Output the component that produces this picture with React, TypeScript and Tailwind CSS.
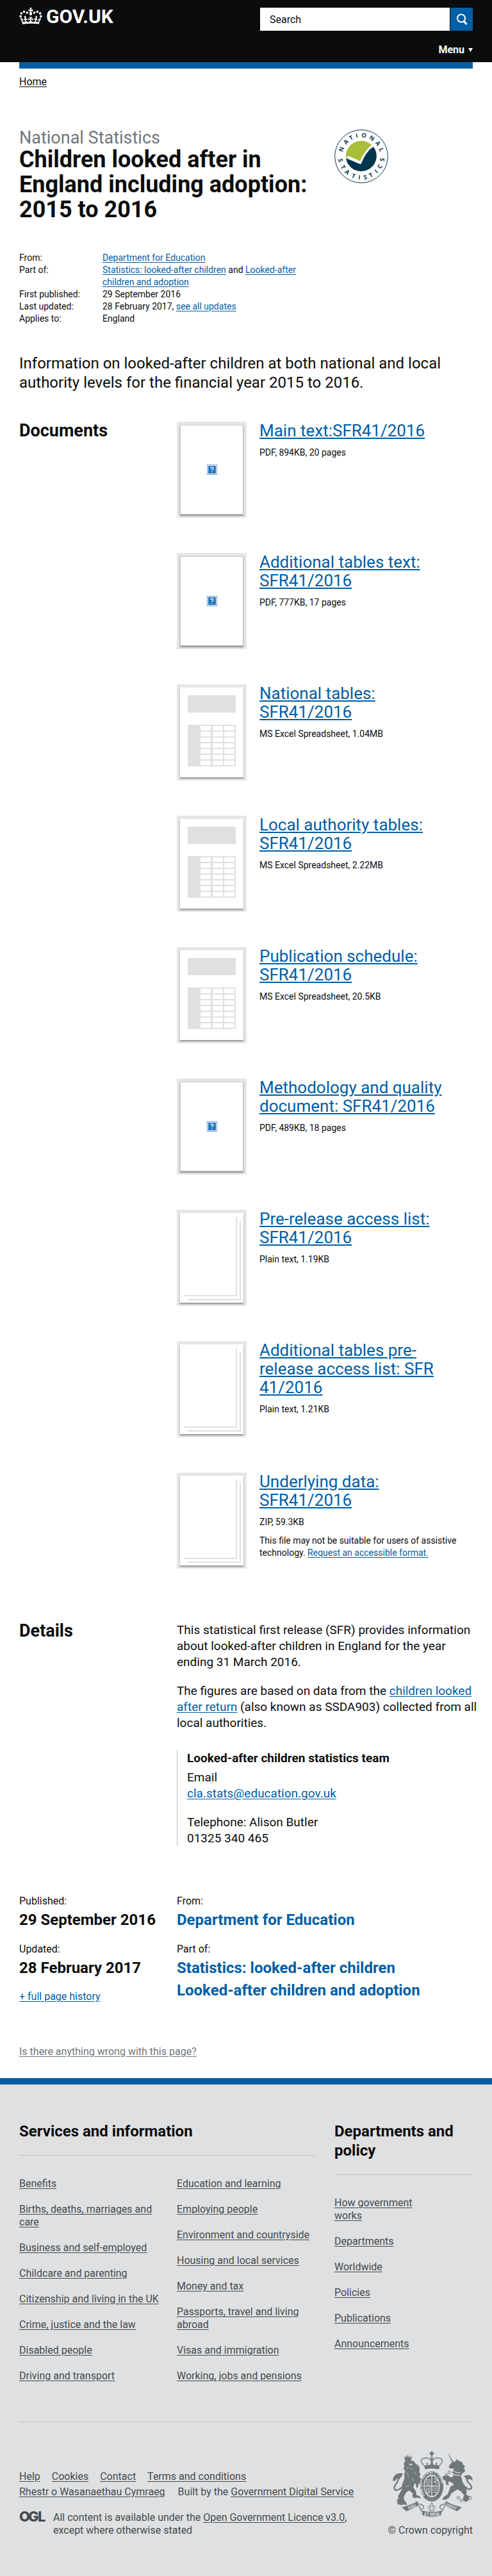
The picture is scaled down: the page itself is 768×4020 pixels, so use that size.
import React from "react";

type ThumbKind = "pdf" | "sheet" | "pages";

interface Doc {
  title: string;
  meta: string;
  kind: ThumbKind;
  accessible?: boolean;
}

const documents: Doc[] = [
  { title: "Main text:SFR41/2016", meta: "PDF, 894KB, 20 pages", kind: "pdf" },
  { title: "Additional tables text: SFR41/2016", meta: "PDF, 777KB, 17 pages", kind: "pdf" },
  { title: "National tables: SFR41/2016", meta: "MS Excel Spreadsheet, 1.04MB", kind: "sheet" },
  { title: "Local authority tables: SFR41/2016", meta: "MS Excel Spreadsheet, 2.22MB", kind: "sheet" },
  { title: "Publication schedule: SFR41/2016", meta: "MS Excel Spreadsheet, 20.5KB", kind: "sheet" },
  { title: "Methodology and quality document: SFR41/2016", meta: "PDF, 489KB, 18 pages", kind: "pdf" },
  { title: "Pre-release access list: SFR41/2016", meta: "Plain text, 1.19KB", kind: "pages" },
  { title: "Additional tables pre-release access list: SFR 41/2016", meta: "Plain text, 1.21KB", kind: "pages" },
  { title: "Underlying data: SFR41/2016", meta: "ZIP, 59.3KB", kind: "pages", accessible: true },
];

const servicesLeft = [
  "Benefits",
  "Births, deaths, marriages and care",
  "Business and self-employed",
  "Childcare and parenting",
  "Citizenship and living in the UK",
  "Crime, justice and the law",
  "Disabled people",
  "Driving and transport",
];

const servicesRight = [
  "Education and learning",
  "Employing people",
  "Environment and countryside",
  "Housing and local services",
  "Money and tax",
  "Passports, travel and living abroad",
  "Visas and immigration",
  "Working, jobs and pensions",
];

const departments = [
  "How government works",
  "Departments",
  "Worldwide",
  "Policies",
  "Publications",
  "Announcements",
];

function Link({ children, className = "" }: { children: React.ReactNode; className?: string }) {
  return (
    <a href="#" className={`text-[#005ea5] underline underline-offset-2 ${className}`}>
      {children}
    </a>
  );
}

function Crown() {
  return (
    <svg viewBox="0 0 132 97" className="h-[26px] w-9 fill-white" aria-hidden="true">
      <path d="M25 30.2c3.5 1.5 7.7-.2 9.1-3.7 1.5-3.6-.2-7.8-3.9-9.2-3.6-1.4-7.6.3-9.1 3.9-1.4 3.5.3 7.5 3.9 9zM9 39.5c3.6 1.5 7.8-.2 9.2-3.7 1.5-3.6-.2-7.8-3.9-9.1-3.6-1.5-7.6.2-9.1 3.8-1.4 3.5.3 7.5 3.8 9zM4.4 57.2c3.5 1.5 7.7-.2 9.1-3.8 1.5-3.6-.2-7.7-3.9-9.1-3.5-1.5-7.6.3-9.1 3.8-1.4 3.5.3 7.6 3.9 9.1zm38.3-21.4c3.5 1.5 7.7-.2 9.1-3.8 1.5-3.6-.2-7.7-3.9-9.1-3.6-1.5-7.6.3-9.1 3.8-1.3 3.6.4 7.7 3.9 9.1zm64.4-5.6c-3.6 1.5-7.8-.2-9.1-3.7-1.5-3.6.2-7.8 3.8-9.2 3.6-1.4 7.7.3 9.2 3.9 1.3 3.5-.4 7.5-3.9 9zm15.9 9.3c-3.6 1.5-7.7-.2-9.1-3.7-1.5-3.6.2-7.8 3.7-9.1 3.6-1.5 7.7.2 9.2 3.8 1.5 3.5-.3 7.5-3.8 9zm4.7 17.7c-3.6 1.5-7.8-.2-9.2-3.8-1.5-3.6.2-7.7 3.9-9.1 3.6-1.5 7.7.3 9.2 3.8 1.3 3.5-.4 7.6-3.9 9.1zM89.3 35.8c-3.6 1.5-7.8-.2-9.2-3.8-1.4-3.6.2-7.7 3.9-9.1 3.6-1.5 7.7.3 9.2 3.8 1.4 3.6-.3 7.7-3.9 9.1zM69.7 17.7l8.9 4.7V9.3l-8.9 2.8c-.2-.3-.5-.6-.9-.9L72.4 0H59.6l3.5 11.2c-.3.3-.6.5-.9.9l-8.8-2.8v13.1l8.8-4.7c.3.3.6.7.9.9l-5 15.4v.1c-.2.8-.4 1.6-.4 2.4 0 4.1 3.1 7.5 7 8.1h.2c.3 0 .7.1 1 .1.4 0 .7 0 1-.1h.2c4-.6 7.1-4.1 7.1-8.1 0-.8-.1-1.7-.4-2.4V34l-5.1-15.4c.4-.2.7-.6 1-.9zM66 92.8c16.9 0 32.8 1.1 47.1 3.2 4-16.9 8.9-26.7 14-33.5l-9.6-3.4c1 4.9 1.1 7.2 0 10.2-1.5-1.4-3-4.3-4.2-8.7L108.6 76c2.8-2 5-3.2 7.5-3.3-4.4 9.4-10 11.9-13.6 11.2-4.3-.8-6.3-4.6-5.6-7.9 1-4.7 5.7-5.9 8-.5 4.3-8.7-3-11.4-7.6-8.8 7.1-7.2 7.9-13.5 2.1-21.1-8 6.1-8.1 12.3-4.5 20.8-4.7-5.4-12.1-2.5-9.5 6.2 3.4-5.2 7.9-2 7.2 3.1-.6 4.3-6.4 7.8-13.5 7.2-10.3-.9-10.9-8-11.2-13.8 2.5-.5 7.1 1.8 11 7.3L80.2 60c-4.1 4.4-8 5.3-12.3 5.4 1.4-4.4 8-11.6 8-11.6H55.5s6.4 7.2 7.9 11.6c-4.2-.1-8-1-12.3-5.4l1.4 16.4c3.9-5.5 8.5-7.7 10.9-7.3-.3 5.8-.9 12.8-11.1 13.8-7.2.6-12.9-2.9-13.5-7.2-.7-5 3.8-8.3 7.1-3.1 2.7-8.7-4.6-11.6-9.4-6.2 3.7-8.5 3.6-14.7-4.6-20.8-5.8 7.6-5 13.9 2.2 21.1-4.7-2.6-11.9.1-7.7 8.8 2.3-5.5 7.1-4.2 8.1.5.7 3.3-1.3 7.1-5.7 7.9-3.5.7-9-1.8-13.5-11.2 2.5.1 4.7 1.3 7.5 3.3l-4.7-15.4c-1.2 4.4-2.7 7.2-4.3 8.7-1.1-3-.9-5.3 0-10.2l-9.5 3.4c5 6.9 9.9 16.7 14 33.5 14.8-2.1 30.8-3.2 47.7-3.2z" />
    </svg>
  );
}

function StatisticsBadge() {
  return (
    <svg viewBox="0 0 252 252" className="size-[84px]" role="img" aria-label="National Statistics">
      <circle cx="126" cy="126" r="124" fill="#fff" stroke="#0b3a50" strokeWidth="3" />
      <path d="M54 134A72 72 0 0 1 174 72C152 92 136 120 124 150L64 124Z" fill="#a9bd38" />
      <path d="M54 134L122 163C138 124 154 98 183 81A72 72 0 1 1 54 134Z" fill="#00364d" />
      <path d="M68 130L122 156C136 120 154 94 180 76" fill="none" stroke="#fff" strokeWidth="9" />
      <path id="badge-top" d="M37 126A89 89 0 0 1 215 126" fill="none" />
      <path id="badge-bottom" d="M17 126A109 109 0 0 0 235 126" fill="none" />
      <g fill="#00364d" fontFamily="'Open Sans', sans-serif" fontWeight="700" fontSize="28">
        {["N", "A", "T", "I", "O", "N", "A", "L"].map((c, i) => (
          <text key={i} textAnchor="middle">
            <textPath href="#badge-top" startOffset={`${[11, 24, 34, 43, 54, 67, 79, 90][i]}%`}>
              {c}
            </textPath>
          </text>
        ))}
        {["S", "T", "A", "T", "I", "S", "T", "I", "C", "S"].map((c, i) => (
          <text key={i} textAnchor="middle">
            <textPath href="#badge-bottom" startOffset={`${[6, 17, 27, 38, 47, 56, 65, 75, 84, 95][i]}%`}>
              {c}
            </textPath>
          </text>
        ))}
      </g>
    </svg>
  );
}

function Thumbnail({ kind }: { kind: ThumbKind }) {
  return (
    <div className="h-[150px] w-[109px] shrink-0 bg-[#e6e6e6] p-[5px]">
      <div
        className={`flex h-[140px] items-center justify-center bg-white shadow-[0_2px_2px_rgba(11,12,12,0.4)] ${
          kind === "pdf" ? "border border-[#c8c8c8]" : ""
        }`}
      >
        {kind === "pdf" && (
          <svg viewBox="0 0 16 16" className="size-4" aria-hidden="true">
            <rect x="0.5" y="0.5" width="15" height="15" fill="#fff" stroke="#6f9bd0" />
            <rect x="2" y="2" width="12" height="12" fill="#2378bd" />
            <path d="M6 6.200C6 3.600 10 3.700 10 6C10 7.600 8 7.500 8 9.300M8 11v1.300" fill="none" stroke="#fff" strokeWidth="1.300" />
          </svg>
        )}
        {kind === "sheet" && (
          <svg viewBox="0 0 99 140" className="h-[140px] w-[99px]" aria-hidden="true">
            <path d="M12 12h75v27H12zM12 58h75v65H12z" fill="#dee0e2" />
            {[0, 1, 2, 3, 4, 5, 6].map((r) =>
              [32, 51, 69].map((x) => <rect key={`${r}-${x}`} x={x} y={60 + r * 9} width="16" height="7" fill="#fff" />),
            )}
          </svg>
        )}
        {kind === "pages" && (
          <svg viewBox="0 0 99 140" className="h-[140px] w-[99px]" aria-hidden="true">
            <path d="M88 6V129H6M94 12V135H12" fill="none" stroke="#dee0e2" strokeWidth="2" />
          </svg>
        )}
      </div>
    </div>
  );
}

function Crest() {
  return (
    <svg viewBox="39 33 375 308" className="h-[103px] w-[125px]" role="img" aria-label="Royal coat of arms">
      <g fill="#6f777b">
        <path d="M218 33h8v7h7v8h-7v10h-8V48h-7v-8h7z" />
        <path d="M188 101Q222 92 257 101L256 119Q222 111 189 119Z" />
        <path d="M187 119Q222 111 257 119V124Q222 116 187 124Z" fill="#dee0e2" />
        <path d="M218 60h8v24h-8zM196 96l4-12 6 12zM238 96l6-12 5 12zM213 97l9-17 9 17z" />
      </g>
      <path
        d="M190 103C165 85 170 66 192 65C210 64 217 72 221 82M254 103C279 85 274 66 252 65C234 64 227 72 223 82"
        fill="none"
        stroke="#6f777b"
        strokeWidth="6"
        strokeDasharray="5 2"
      />
      <g fill="#6f777b">
        <path d="M92 56l6 9 3-12 5 11 4-17 4 17 6-11 2 12 8-9-5 21-28 2z" />
        <path d="M98 80L118 76L137 79L148 94L158 98L166 114L163 128L169 144L164 152L174 168L171 184L160 188L157 202L150 206L148 188L140 184L136 204L148 221L150 238L166 244L170 256L158 251L140 253L130 245L134 232L117 217L102 226L91 246L93 262L104 276L106 286L90 282L78 286L60 280L62 270L57 262L66 255L64 244L72 230L84 208L82 190L88 178L94 160L93 140L98 128L90 116L94 100L90 92Z" />
        <path d="M112 90l10 4 10-3-4 9-9-2z" fill="#dee0e2" />
        <path d="M121 112l12 6M112 104l-4 12M140 130l9 10M106 134l8 18M128 158l10 16M100 200l16-6" stroke="#dee0e2" strokeWidth="2" />
        <path d="M296 39L324 84L318 88Z" />
        <path d="M304 100L318 84L332 82L338 70L348 78L364 84L368 96L377 102L373 114L379 126L366 136L358 150L364 166L366 184L378 196L386 216L384 236L398 246L396 260L382 270L370 266L368 252L374 240L360 222L342 212L334 218L314 230L304 250L284 262L270 258L282 244L296 236L304 214L310 198L326 190L314 178L298 176L302 192L290 190L286 172L274 164L272 152L288 146L300 148L312 156L324 150L318 132L326 116L314 114L302 112Z" />
        <path d="M39 172L43 154L56 140L74 136L87 138L80 152L70 164L60 160L50 172ZM414 172L410 154L396 144L376 148L372 150L382 162L392 166L402 164Z" />
      </g>
      <path
        d="M66 158C68 180 42 190 47 210C52 222 72 212 86 200M386 162C384 182 412 188 408 206C402 218 386 208 370 194"
        fill="none"
        stroke="#6f777b"
        strokeWidth="7"
      />
      <path d="M316 122q18 14 42 12M312 132q18 16 44 14" stroke="#dee0e2" strokeWidth="4" fill="none" />
      <path d="M318 128l5 6 5-3 5 8 6-4 4 6 6-4 4 5" stroke="#6f777b" strokeWidth="3" fill="none" />
      <g fill="none" stroke="#6f777b" strokeWidth="3">
        <circle cx="304" cy="132" r="6" />
        <circle cx="290" cy="144" r="6" />
        <circle cx="366" cy="186" r="6" />
        <circle cx="370" cy="224" r="6" />
        <circle cx="346" cy="251" r="6" />
        <circle cx="360" cy="264" r="6" />
        <circle cx="383" cy="260" r="8" />
        <circle cx="399" cy="252" r="8" />
      </g>
      <ellipse cx="222" cy="198" rx="56" ry="73" fill="#dee0e2" />
      <ellipse cx="222" cy="198" rx="54" ry="71" fill="#6f777b" />
      <ellipse cx="222" cy="196" rx="38" ry="53" fill="#dee0e2" />
      <path id="garter" d="M190 240C162 195 180 139 222 138C266 139 282 197 252 242" fill="none" />
      <text fill="#dee0e2" fontFamily="Roboto, sans-serif" fontWeight="700" fontSize="15">
        <textPath href="#garter">HONI SOIT QUI MAL Y PENSE</textPath>
      </text>
      <path d="M200 256q22 8 44 0" fill="none" stroke="#dee0e2" strokeWidth="3" strokeDasharray="4 10" />
      <ellipse cx="222" cy="196" rx="34" ry="47" fill="#6f777b" />
      <path d="M222 148v96M188 196h68" stroke="#dee0e2" strokeWidth="4" />
      <path
        d="M196 168h20M194 178h22M196 188h18M232 160l18 10-18 6 20 10M198 204v22q10 12 16-4v-20M206 204v24M230 206h22M230 216h20M232 226h14"
        fill="none"
        stroke="#dee0e2"
        strokeWidth="4"
        strokeDasharray="6 2"
      />
      <g fill="#6f777b" stroke="#dee0e2" strokeWidth="2">
        <path d="M80 295L92 306L104 315Q136 302 162 286L156 266Q128 284 80 295Z" />
        <path d="M364 295L352 306L340 315Q308 302 282 286L288 266Q316 284 364 295Z" />
        <path d="M174 310Q222 324 270 310L266 334Q222 348 178 334Z" />
      </g>
      <path
        d="M160 287Q168 302 175 316M162 280Q186 284 184 298Q180 304 174 306M284 287Q276 302 269 316M282 280Q258 284 260 298Q264 304 270 306"
        fill="none"
        stroke="#6f777b"
        strokeWidth="4"
      />
      <path d="M222 274q9 12 4 20 12-8 12 2 0 8-10 6l4 10h-20l4-10q-10 2-10-6 0-10 12-2-5-8 4-20z" fill="none" stroke="#6f777b" strokeWidth="3" />
      <g fill="#dee0e2" fontFamily="Roboto, sans-serif" fontWeight="700" textAnchor="middle">
        <text x="222" y="335" fontSize="19">ET MON</text>
        <text x="130" y="299" fontSize="18" transform="rotate(-24 130 294)">DIEU</text>
        <text x="314" y="299" fontSize="18" transform="rotate(24 314 294)">DROIT</text>
      </g>
    </svg>
  );
}

function FooterLinks({ items }: { items: string[] }) {
  return (
    <ul className="-mr-3 flex flex-col gap-5">
      {items.map((item) => (
        <li key={item}>
          <a href="#" className="underline underline-offset-2">
            {item}
          </a>
        </li>
      ))}
    </ul>
  );
}

function Header() {
  return (
    <header>
      <div className="flex h-[97px] flex-col justify-between bg-[#0b0c0c] px-[30px] pt-3 pb-[9px] text-white">
        <div className="flex items-start justify-between">
          <a href="#" className="flex items-start gap-[6px] text-[30px] leading-7 font-bold">
            <Crown />
            GOV.UK
          </a>
          <form className="flex gap-px" onSubmit={(e) => e.preventDefault()}>
            <input
              type="search"
              aria-label="Search"
              placeholder="Search"
              className="h-9 w-[296px] bg-white px-[15px] text-base text-[#0b0c0c] outline-none placeholder:text-[#0b0c0c]"
            />
            <button type="submit" aria-label="Search" className="flex h-9 w-[35px] items-center justify-center bg-[#005ea5]">
              <svg viewBox="0 0 18 18" className="size-[18px]" fill="none" stroke="#fff" aria-hidden="true">
                <circle cx="8" cy="7.500" r="6" strokeWidth="2" />
                <path d="M12 12l4.500 5" strokeWidth="3" />
              </svg>
            </button>
          </form>
        </div>
        <button type="button" className="flex items-center gap-[6px] self-end text-base leading-5 font-bold">
          Menu
          <svg viewBox="0 0 7 6" className="h-[6px] w-[7px] fill-white" aria-hidden="true">
            <path d="M0 0h7L3.500 6z" />
          </svg>
        </button>
      </div>
      <div className="mx-[30px] h-[10px] bg-[#005ea5]" />
    </header>
  );
}

export default function App() {
  return (
    <div className="bg-white font-[Roboto,sans-serif] text-base leading-5 text-[#0b0c0c]">
      <Header />

      <main className="px-[30px]">
        <nav aria-label="Breadcrumb" className="pt-[11px]">
          <a href="#" className="underline underline-offset-2">Home</a>
        </nav>

        <div className="mt-[62px] grid grid-cols-3 gap-[30px]">
          <div className="col-span-2">
            <p className="text-[27px] leading-[30px] text-[#6f777b]">National Statistics</p>
            <h1 className="text-[36px] leading-[39px] font-bold">Children looked after in England including adoption: 2015 to 2016</h1>
          </div>
          <div className="pt-[2px]">
            <StatisticsBadge />
          </div>
        </div>

        <dl className="mt-[46px] grid w-[445px] max-w-full grid-cols-[130px_1fr] text-sm leading-[19px]">
          <dt>From:</dt>
          <dd><Link>Department for Education</Link></dd>
          <dt>Part of:</dt>
          <dd><Link>Statistics: looked-after children</Link> and <Link>Looked-after children and adoption</Link></dd>
          <dt>First published:</dt>
          <dd>29 September 2016</dd>
          <dt>Last updated:</dt>
          <dd>28 February 2017, <Link>see all updates</Link></dd>
          <dt>Applies to:</dt>
          <dd>England</dd>
        </dl>

        <p className="mt-[45px] text-2xl leading-[30px]">
          Information on looked-after children at both national and local authority levels for the financial year 2015 to 2016.
        </p>

        <section className="mt-[46px] grid grid-cols-3 gap-[30px]">
          <h2 className="text-[27px] leading-[29px] font-bold">Documents</h2>
          <ul className="col-span-2 flex flex-col gap-[55px]">
            {documents.map((doc) => (
              <li key={doc.title} className="flex gap-5">
                <Thumbnail kind={doc.kind} />
                <div className="flex flex-1 flex-col gap-[10px] text-sm leading-[19px]">
                  <h3 className="max-w-[300px] text-[26px] leading-[29px]">
                    <Link>{doc.title}</Link>
                  </h3>
                  <p>{doc.meta}</p>
                  {doc.accessible && (
                    <p>
                      This file may not be suitable for users of assistive technology. <Link>Request an accessible format.</Link>
                    </p>
                  )}
                </div>
              </li>
            ))}
          </ul>
        </section>

        <section className="mt-[83px] grid grid-cols-3 gap-[30px]">
          <h2 className="text-[27px] leading-[29px] font-bold">Details</h2>
          <div className="col-span-2 -mr-3 flex flex-col gap-5 text-[19px] leading-[25px]">
            <p>
              This statistical first release (SFR) provides information about looked-after children in England for the year ending 31 March 2016.
            </p>
            <p>
              The figures are based on data from the <Link>children looked after return</Link> (also known as SSDA903) collected from all local authorities.
            </p>
            <address className="mt-[10px] border-l border-[#bfc1c3] pl-[15px] not-italic">
              <h3 className="mb-[5px] font-bold">Looked-after children statistics team</h3>
              <p>Email</p>
              <p><Link>cla.stats@education.gov.uk</Link></p>
              <p className="mt-5">Telephone: Alison Butler</p>
              <p>01325 340 465</p>
            </address>
          </div>
        </section>

        <section className="mt-[76px] grid grid-cols-3 gap-x-[30px] gap-y-[21px]">
          <div>
            <p>Published:</p>
            <p className="mt-1 text-2xl leading-[30px] font-bold">29 September 2016</p>
          </div>
          <div className="col-span-2">
            <p>From:</p>
            <p className="mt-1 text-2xl leading-[30px] font-bold"><a href="#" className="text-[#005ea5]">Department for Education</a></p>
          </div>
          <div>
            <p>Updated:</p>
            <p className="mt-1 text-2xl leading-[30px] font-bold">28 February 2017</p>
            <p className="mt-5"><Link>+ full page history</Link></p>
          </div>
          <div className="col-span-2">
            <p>Part of:</p>
            <p className="mt-1 text-2xl leading-[30px] font-bold"><a href="#" className="text-[#005ea5]">Statistics: looked-after children</a></p>
            <p className="mt-[5px] text-2xl leading-[30px] font-bold"><a href="#" className="text-[#005ea5]">Looked-after children and adoption</a></p>
          </div>
        </section>

        <p className="pt-[66px] pb-[31px]">
          <a href="#" className="text-[#6f777b] underline underline-offset-2">Is there anything wrong with this page?</a>
        </p>
      </main>

      <footer className="border-t-[10px] border-[#005ea5] bg-[#dee0e2] px-[30px] pt-[58px] pb-[61px] text-[#454a4c]">
        <div className="grid grid-cols-3 gap-[30px]">
          <section className="col-span-2">
            <h2 className="border-b border-[#bfc1c3] pb-[22px] text-2xl leading-[30px] font-bold text-[#0b0c0c]">Services and information</h2>
            <div className="mt-[34px] grid grid-cols-2 gap-[30px]">
              <FooterLinks items={servicesLeft} />
              <FooterLinks items={servicesRight} />
            </div>
          </section>
          <section>
            <h2 className="border-b border-[#bfc1c3] pb-[22px] text-2xl leading-[30px] font-bold text-[#0b0c0c]">Departments and policy</h2>
            <div className="mt-[34px] w-[140px]">
              <FooterLinks items={departments} />
            </div>
          </section>
        </div>

        <div className="mt-[61px] flex items-end justify-between border-t border-[#bfc1c3] pt-[45px]">
          <div>
            <ul className="flex flex-wrap gap-x-[18px]">
              {["Help", "Cookies", "Contact", "Terms and conditions"].map((t) => (
                <li key={t}><a href="#" className="underline underline-offset-2">{t}</a></li>
              ))}
            </ul>
            <ul className="mt-1 flex flex-wrap gap-x-5">
              <li><a href="#" className="underline underline-offset-2">Rhestr o Wasanaethau Cymraeg</a></li>
              <li>Built by the <a href="#" className="underline underline-offset-2">Government Digital Service</a></li>
            </ul>
            <div className="mt-5 flex gap-3">
              <svg viewBox="0 0 41 17" className="h-[17px] w-[41px] overflow-visible" role="img" aria-label="Open Government Licence">
                <g fill="#454a4c" fontFamily="Inter, sans-serif" fontWeight="800" fontSize="22">
                  <text y="16">O</text>
                  <text x="14" y="16">G</text>
                  <text x="29" y="16">L</text>
                </g>
              </svg>
              <p className="w-[460px]">
                All content is available under the <a href="#" className="underline underline-offset-2">Open Government Licence v3.0</a>, except where otherwise stated
              </p>
            </div>
          </div>
          <a href="#" className="flex flex-col items-end gap-[11px]">
            <Crest />
            <span>© Crown copyright</span>
          </a>
        </div>
      </footer>
    </div>
  );
}
